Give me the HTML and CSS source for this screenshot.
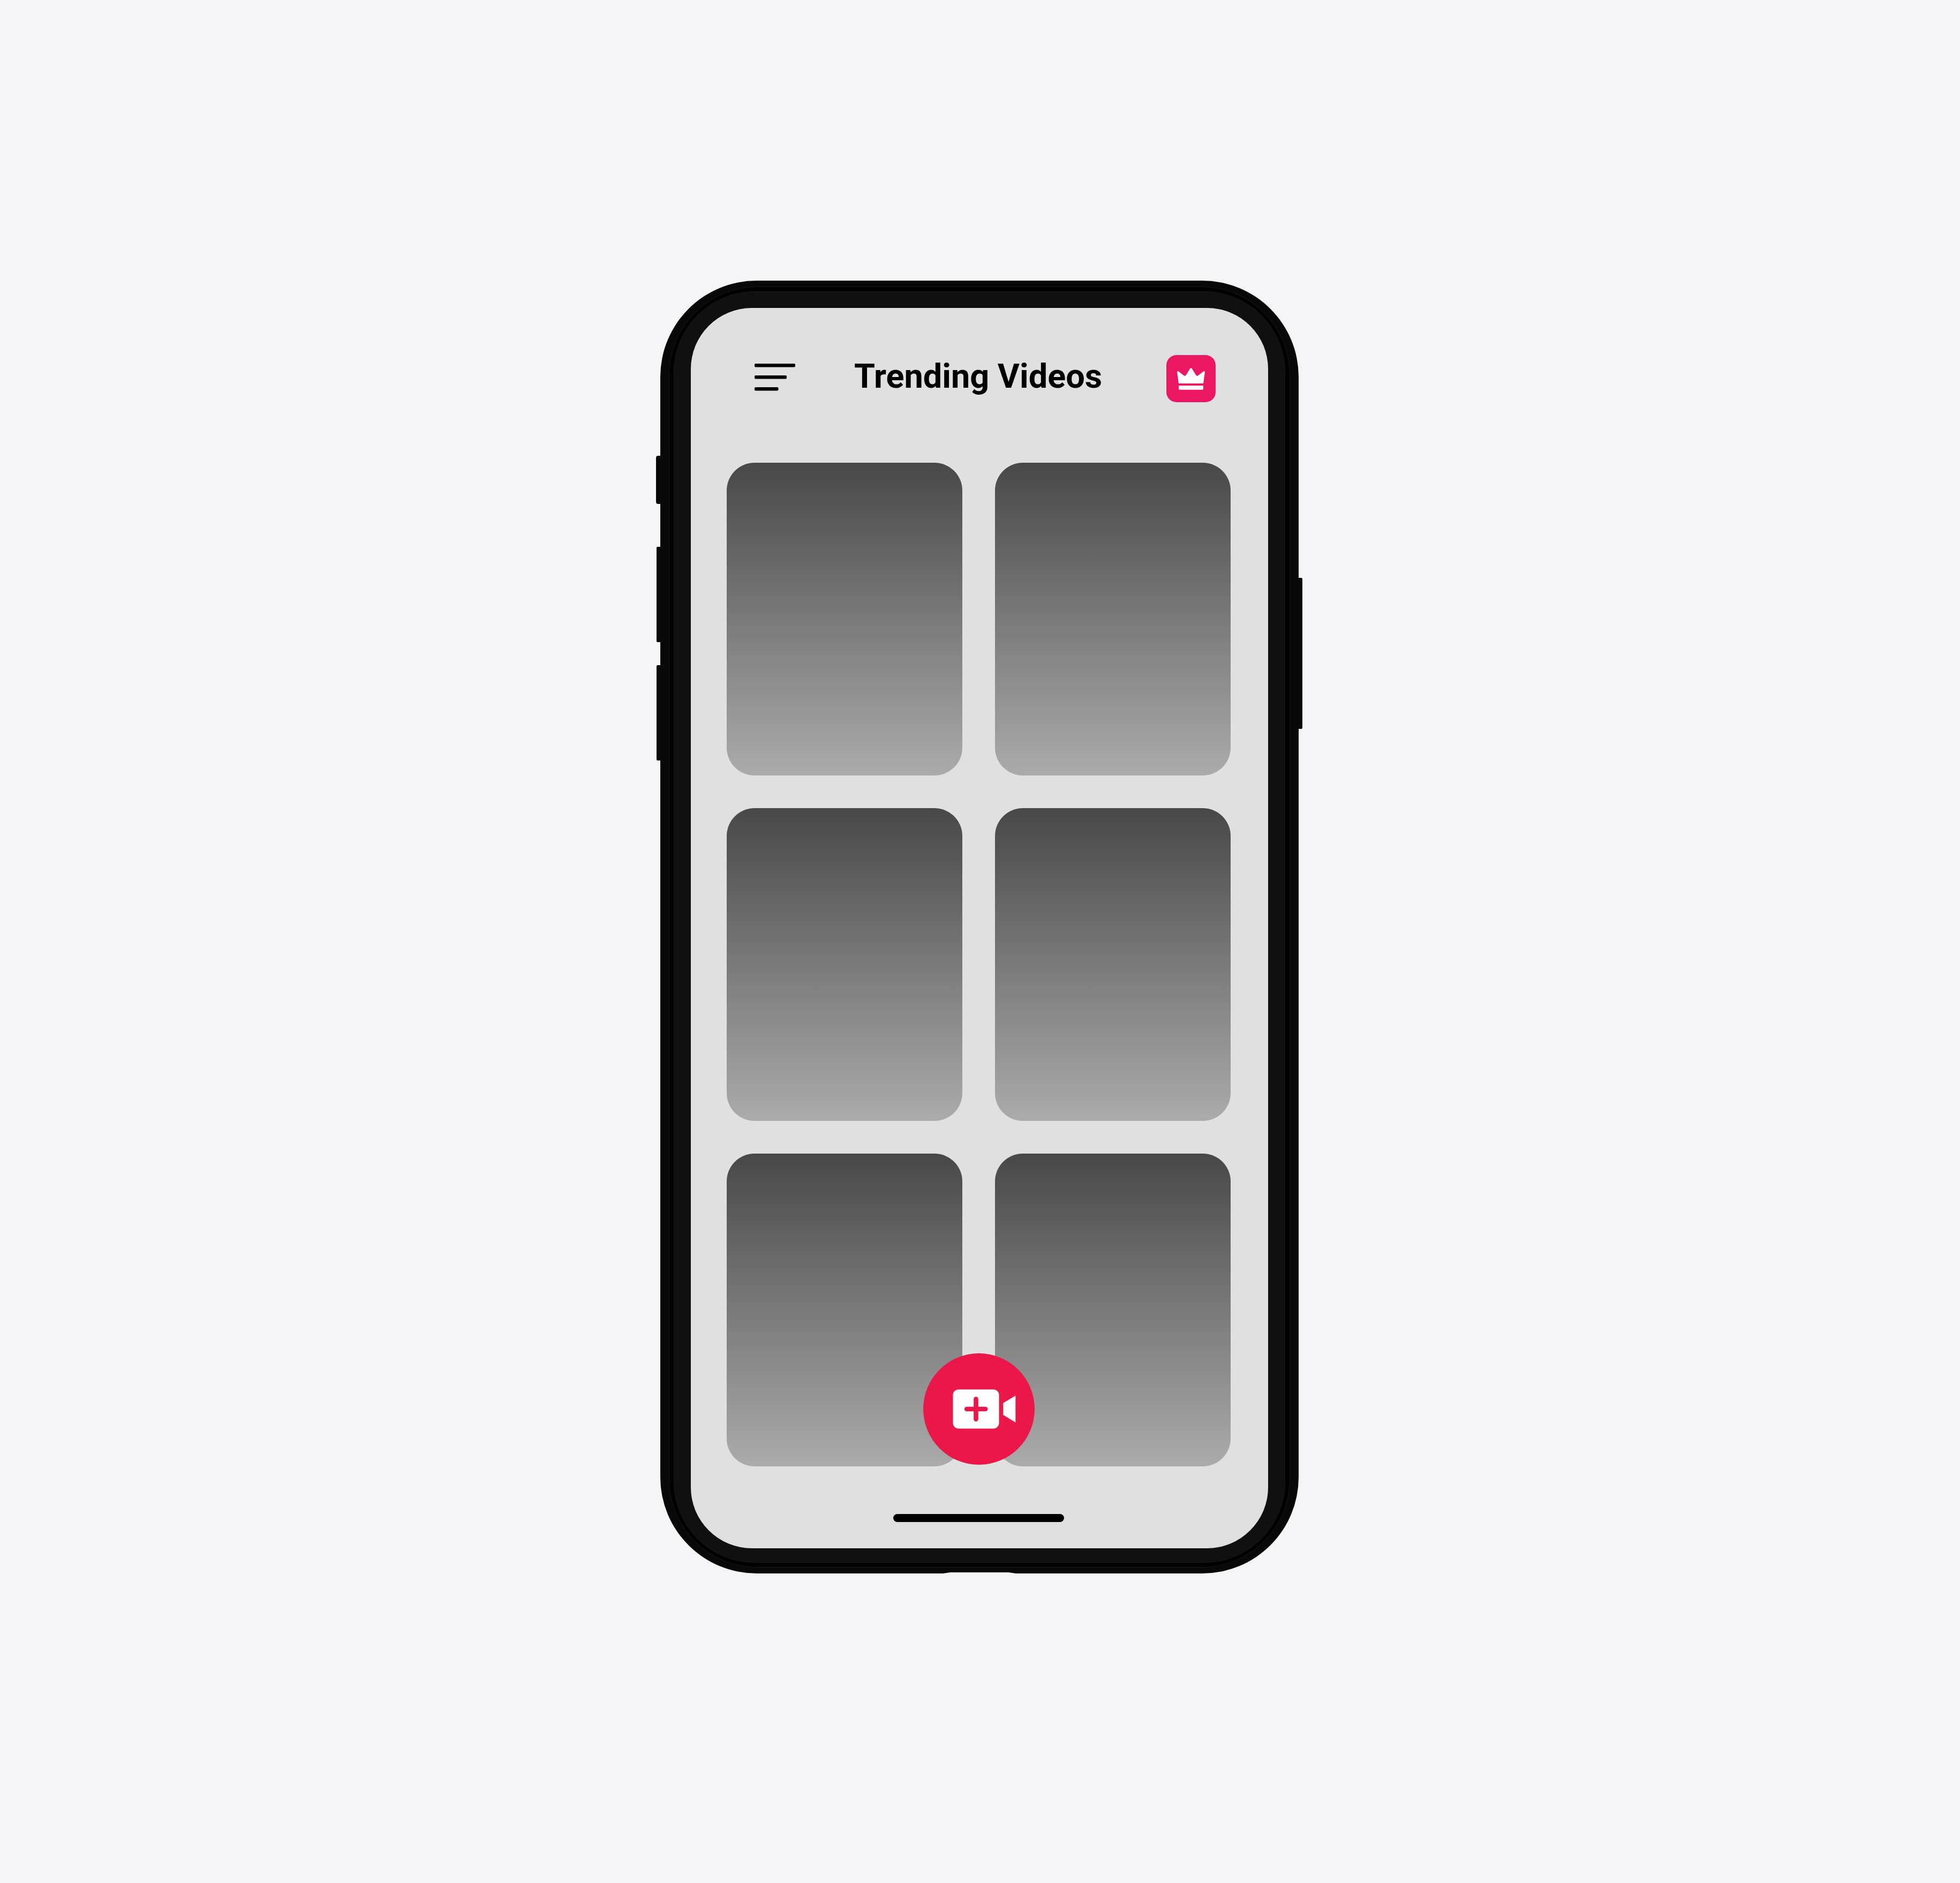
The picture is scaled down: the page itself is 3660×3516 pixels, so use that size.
FILE: index.html
```html
<!DOCTYPE html>
<html lang="en">
<head>
<meta charset="utf-8">
<meta name="viewport" content="width=device-width, initial-scale=1">
<title>Trending Videos</title>
<link rel="stylesheet" href="styles.css">
</head>
<body>
<div class="device">
  <div class="keys keys-left">
    <span class="key key-mute"></span>
    <span class="key key-volume"></span>
    <span class="key key-volume"></span>
  </div>
  <div class="frame">
    <div class="groove">
      <div class="bezel">
        <main class="screen">
          <header class="topbar">
            <button class="menu" type="button" aria-label="Menu">
              <svg viewBox="0 0 76 80" aria-hidden="true">
                <rect x="0" y="16" width="76" height="6.5" rx="2"/>
                <rect x="0" y="38" width="60" height="6.5" rx="2"/>
                <rect x="0" y="60" width="44.5" height="6.5" rx="2"/>
              </svg>
            </button>
            <h1 class="title">Trending Videos</h1>
            <button class="premium" type="button" aria-label="Premium">
              <svg viewBox="0 0 92 88" aria-hidden="true">
                <path d="M20.1 32.2Q19.9 29.6 22.3 30.2L33.2 38.4Q35 39.5 36.3 37.9L44.1 25.6Q46 22.9 47.9 25.6L55.7 37.9Q57 39.5 58.8 38.4L69.7 30.2Q72.1 29.6 71.9 32.2L69 53H23Z"/>
                <path d="M23 57H69V63Q69 64.8 67.2 64.8H24.8Q23 64.8 23 63Z"/>
              </svg>
            </button>
          </header>
          <section class="feed" aria-label="Videos">
            <ul class="videos">
              <li class="video"></li>
              <li class="video"></li>
              <li class="video"></li>
              <li class="video"></li>
              <li class="video"></li>
              <li class="video"></li>
            </ul>
            <button class="record" type="button" aria-label="Add video">
              <svg viewBox="0 0 208 208" aria-hidden="true">
                <rect class="icon-fill" x="55.5" y="67.5" width="86" height="73" rx="10"/>
                <path class="icon-fill" d="M149.3 92.7L172.3 79V129L149.3 115Z"/>
                <path class="icon-plus" d="M98.5 85.3V123M81.2 104H116.2"/>
              </svg>
            </button>
          </section>
          <div class="home-indicator"></div>
        </main>
      </div>
    </div>
  </div>
  <div class="keys keys-right">
    <span class="key key-power"></span>
  </div>
</div>
</body>
</html>
```
FILE: styles.css
```css
* {
  box-sizing: border-box;
}

body {
  margin: 0;
  min-height: 100vh;
  padding: 524px 3px 0 0;
  background: #f5f5f7;
  font-family: Roboto, "Liberation Sans", sans-serif;
  color: #000;
}

button {
  display: block;
  margin: 0;
  padding: 0;
  border: 0;
  background: none;
  cursor: pointer;
}

svg {
  display: block;
  width: 100%;
  height: 100%;
}

/* Phone body */

.device {
  display: grid;
  grid-template-columns: 8px minmax(0, 1fr) 7px;
  max-width: 1207px;
  margin: 0 auto;
}

.keys {
  display: flex;
  flex-direction: column;
}

.keys-left {
  padding-top: 327px;
  align-items: flex-end;
}

.keys-right {
  padding-top: 555px;
}

.key {
  width: 7px;
  background: #080808;
}

.key-mute {
  width: 8px;
  height: 90px;
  margin-bottom: 80px;
  border-radius: 4px 0 0 4px;
}

.key-volume {
  height: 178px;
  margin-bottom: 43px;
  border-radius: 2px 0 0 2px;
}

.key-power {
  height: 282px;
  border-radius: 0 2px 2px 0;
}

.frame {
  position: relative;
  padding: 12px 17px;
  border-radius: 180px;
  background: #080808;
}

/* Shallow recess in the lower edge */
.frame::after {
  content: "";
  position: absolute;
  bottom: 0;
  left: 50%;
  width: 136px;
  height: 2px;
  transform: translateX(-50%);
  background: #f5f5f7;
  clip-path: polygon(10% 0, 90% 0, 100% 100%, 0 100%);
}

.groove {
  padding: 8px;
  border-radius: 164px;
  background: #000;
  box-shadow: 0 0 0 1px #161616;
}

.bezel {
  padding: 31px 32px 27px;
  border-radius: 152px;
  background: #101010;
  box-shadow: inset 0 0 0 1px #181818;
}

/* Screen */

.screen {
  padding: 88px 70px 49px 67px;
  border-radius: 114px;
  background: #e0e0e0;
}

.topbar {
  display: flex;
  align-items: flex-start;
  gap: 110px;
  height: 88px;
  margin: 0 28px 113px 52px;
}

.menu {
  flex: none;
  width: 76px;
  height: 80px;
}

.title {
  margin: 0;
  font-size: 63px;
  font-weight: 700;
  line-height: 80px;
  white-space: nowrap;
}

.premium {
  flex: none;
  width: 92px;
  height: 88px;
  margin-left: auto;
  border-radius: 19px;
  background: #ec1763;
  fill: #fff;
}

.feed {
  position: relative;
}

.videos {
  display: grid;
  grid-template-columns: 1fr 1fr;
  gap: 61px;
  margin: 0;
  padding: 0;
  list-style: none;
}

.video {
  aspect-ratio: 440 / 584;
  border-radius: 52px;
  background: linear-gradient(#484848, #ababab);
}

.record {
  position: absolute;
  bottom: 3px;
  left: 50%;
  width: 208px;
  height: 208px;
  transform: translateX(-50%);
  border-radius: 50%;
  background: #eb1748;
}

.icon-fill {
  fill: #fff;
}

.icon-plus {
  fill: none;
  stroke: #eb1748;
  stroke-width: 8.6;
  stroke-linecap: round;
}

.home-indicator {
  width: 319px;
  max-width: 50%;
  height: 15px;
  margin: 89px auto 0;
  border-radius: 8px;
  background: #000;
}
```
